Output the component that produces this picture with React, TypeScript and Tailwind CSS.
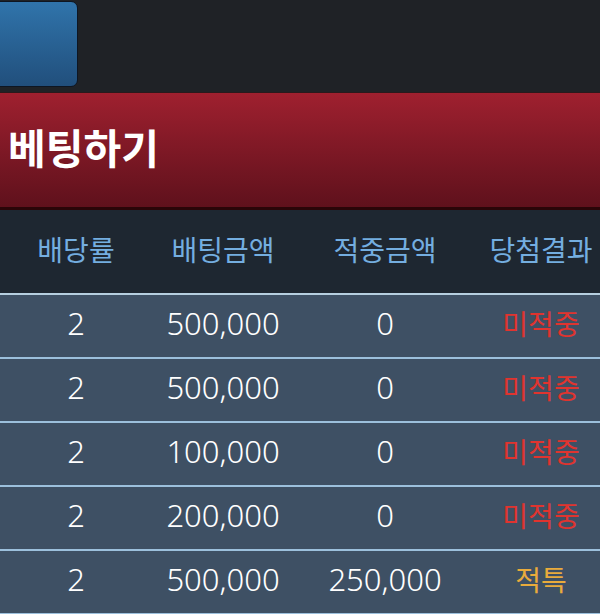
import React from "react";

type Row = {
  odds: string;
  bet: string;
  win: string;
  result: string;
  hit: boolean;
};

const rows: Row[] = [
  { odds: "2", bet: "500,000", win: "0", result: "미적중", hit: false },
  { odds: "2", bet: "500,000", win: "0", result: "미적중", hit: false },
  { odds: "2", bet: "100,000", win: "0", result: "미적중", hit: false },
  { odds: "2", bet: "200,000", win: "0", result: "미적중", hit: false },
  { odds: "2", bet: "500,000", win: "250,000", result: "적특", hit: true },
];

const cols = "grid w-[606px] grid-cols-[152px_142px_182px_130px]";
const font = "font-['Noto_Sans','Noto_Sans_CJK_KR',sans-serif]";

export default function App() {
  return (
    <div className={`h-[614px] w-[600px] overflow-hidden bg-[#1e2731] ${font}`}>
      {/* top bar */}
      <div className="flex h-[92px] items-start bg-[#1f2226] pt-px">
        <button className="-ml-2 h-[86px] w-[86px] rounded-[7px] border border-[#0e1622] bg-gradient-to-b from-[#3074ab] to-[#214f7c]" />
      </div>

      {/* title */}
      <div className="flex h-[118px] items-center border-t border-[#2a1a1c] border-b-[3px] border-b-[#2a0508] bg-gradient-to-b from-[#9f202f] to-[#5f111c] pl-2 pb-1">
        <h1 className="text-[41px] font-bold leading-none text-white">베팅하기</h1>
      </div>

      {/* header */}
      <div className={`${cols} h-[85px] items-center border-b-2 border-[#b6cfe0] pb-1 text-center text-[28px] text-[#74aee0]`}>
        <div>배당률</div>
        <div>배팅금액</div>
        <div>적중금액</div>
        <div>당첨결과</div>
      </div>

      {rows.map((r, i) => (
        <div
          key={i}
          className={`${cols} h-[64px] items-center border-b-2 border-[#9cc0dc] bg-[#3e5064] pb-[5px] text-center text-[31px] font-light text-white`}
        >
          <div>{r.odds}</div>
          <div>{r.bet}</div>
          <div>{r.win}</div>
          <div className={`text-[28px] font-normal ${r.hit ? "text-[#e9ab3c]" : "text-[#e0342f]"}`}>
            {r.result}
          </div>
        </div>
      ))}
    </div>
  );
}
